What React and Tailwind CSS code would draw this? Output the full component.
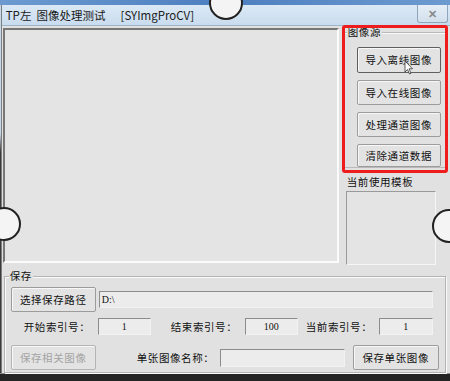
import React from 'react';

const font = { fontFamily: '"Noto Sans CJK SC", "Noto Sans", sans-serif' };

// win-style push button
const Btn = ({ children, className = '', disabled, strong }) => (
  <div
    className={`flex items-center justify-center rounded-[2px] border bg-[#e3e3e3] text-[10.5px] tracking-[0.6px] shadow-[inset_1px_1px_0_#f7f7f7] ${
      strong ? 'border-[#5f5f5f]' : 'border-[#9c9c9c]'
    } ${disabled ? 'text-[#a3a3a3] border-[#b4b4b4]' : 'text-[#111]'} ${className}`}
  >
    {children}
  </div>
);

const Field = ({ children, className = '', align = 'center' }) => (
  <div
    className={`flex items-center h-[17px] border border-t-[#8c8c8c] border-l-[#8c8c8c] border-r-[#f2f2f2] border-b-[#f2f2f2] bg-[#ececec] text-[10px] text-[#111] ${
      align === 'left' ? 'justify-start pl-[2px]' : 'justify-center'
    } ${className}`}
    style={{ fontFamily: '"Liberation Serif", serif' }}
  >
    {children}
  </div>
);

const Label = ({ children, className = '' }) => (
  <span className={`text-[10.5px] tracking-[0.6px] text-[#111] whitespace-nowrap ${className}`}>{children}</span>
);

const Circle = ({ className }) => (
  <div className={`absolute w-[34px] h-[34px] rounded-full bg-[#f4f4f4] border-2 border-[#222] ${className}`} />
);

export default function App() {
  return (
    <div className="relative w-[450px] h-[381px] overflow-hidden bg-[#1c1c1c]" style={font}>
      {/* screen behind the window */}
      <div className="h-[5px] bg-linear-to-r from-[#6d9bd0] via-[#4c7fc0] to-[#6d9bd0]" />

      <div className="flex h-[368px]">
        {/* left frame */}
        <div className="w-[6px] bg-linear-to-b from-[#c7d8e8] from-35% to-[#3b3b3b] to-40% border-r border-[#7d7d7d]" />

        <div className="flex-1 flex flex-col">
          {/* title bar */}
          <div className="h-[23px] flex items-center bg-linear-to-b from-[#dbe9f6] to-[#c9dcee] border-b border-[#9fb4c8]">
            <span className="pl-[4px] pt-[2px] text-[11.5px] text-[#1a1a1a] whitespace-nowrap">
              TP左&nbsp;&nbsp;图像处理测试
            </span>
            <span className="ml-[15px] pt-[2px] text-[11.5px] text-[#1a1a1a] whitespace-nowrap">[SYImgProCV]</span>
            <div className="ml-auto mr-[2px] self-start w-[31px] h-[18px] rounded-b-[3px] border border-t-0 border-[#8ea5bb] bg-linear-to-b from-[#e6eef6] to-[#d2e0ed] flex items-center justify-center text-[#8a8a8a] text-[11px] font-bold">
              ✕
            </div>
          </div>

          {/* client area */}
          <div className="flex-1 bg-[#e1e1e1] flex flex-col pl-[1px] pr-[3px]">
            <div className="flex pt-[2px]">
              {/* image panel */}
              <div className="w-[336px] h-[235px] border-2 border-t-[#777] border-l-[#777] border-r-[#fbfbfb] border-b-[#fbfbfb] bg-[#e4e4e4]" />

              {/* right column */}
              <div className="flex-1 flex flex-col pl-[4px]">
                <div className="relative mt-[4px] h-[136px] border border-[#b9b9b9] shadow-[inset_1px_1px_0_#fafafa] flex flex-col items-center pt-[14px] gap-[7px]">
                  <span className="absolute -top-[7px] left-[3px] bg-[#e1e1e1] px-[1px] text-[10.5px] tracking-[0.6px] leading-[12px] text-[#111]">
                    图像源
                  </span>
                  <Btn strong className="w-[84px] h-[26px] ml-[8px]">导入离线图像</Btn>
                  <Btn className="w-[84px] h-[25px] ml-[8px]">导入在线图像</Btn>
                  <Btn className="w-[84px] h-[25px] ml-[8px]">处理通道图像</Btn>
                  <Btn className="w-[84px] h-[23px] ml-[8px]">清除通道数据</Btn>
                </div>
                <Label className="mt-[7px] ml-[4px] leading-[14px]">当前使用模板</Label>
                <div className="mt-[2px] ml-[3px] w-[90px] h-[74px] border border-t-[#9a9a9a] border-l-[#9a9a9a] border-r-[#f6f6f6] border-b-[#f6f6f6] bg-[#e4e4e4]" />
              </div>
            </div>

            {/* save group */}
            <div className="relative mt-[11px] ml-[1px] mr-[1px] h-[97px] border border-[#b3b3b3] shadow-[inset_1px_1px_0_#fafafa,1px_1px_0_#fafafa] flex flex-col px-[6px] pt-[10px]">
              <span className="absolute -top-[7px] left-[4px] bg-[#e1e1e1] px-[1px] text-[10.5px] tracking-[0.6px] leading-[12px] text-[#111]">
                保存
              </span>
              <div className="flex items-center">
                <Btn className="w-[85px] h-[25px]">选择保存路径</Btn>
                <Field align="left" className="ml-[3px] w-[334px]">D:\</Field>
              </div>
              <div className="flex items-center mt-[6px] h-[17px]">
                <Label className="ml-[13px] w-[74px]">开始索引号：</Label>
                <Field className="w-[53px]">1</Field>
                <Label className="ml-[20px] w-[74px]">结束索引号：</Label>
                <Field className="w-[53px]">100</Field>
                <Label className="ml-[8px] w-[73px]">当前索引号：</Label>
                <Field className="w-[54px] border-t-[#6a6a6a] border-l-[#6a6a6a] bg-[#e3e3e3]">1</Field>
              </div>
              <div className="flex items-center mt-[10px]">
                <Btn disabled className="w-[85px] h-[25px]">保存相关图像</Btn>
                <Label className="ml-[41px] w-[83px]">单张图像名称：</Label>
                <Field className="w-[125px] h-[18px]" />
                <Btn className="ml-[8px] w-[86px] h-[25px]">保存单张图像</Btn>
              </div>
            </div>
          </div>
        </div>
        <div className="w-[2px] bg-[#cfd9e3]" />
      </div>

      {/* bottom frame */}
      <div className="h-[8px] border-t border-[#8a8a8a] bg-[#242424]" />

      {/* red annotation box */}
      <div className="absolute left-[342px] top-[25px] w-[106px] h-[148px] border-[3px] border-[#ee1c1c] rounded-[3px]" />

      {/* cursor */}
      <svg className="absolute left-[404px] top-[60px]" width="10" height="15" viewBox="0 0 10 15">
        <path d="M1 1 L1 12 L3.5 9.5 L5.5 14 L7 13.3 L5 8.8 L8.5 8.8 Z" fill="#fff" stroke="#333" strokeWidth="0.8" />
      </svg>

      {/* handles */}
      <Circle className="left-[209px] -top-[14px]" />
      <Circle className="-left-[13px] top-[207px]" />
      <Circle className="left-[432px] top-[209px]" />
    </div>
  );
}
